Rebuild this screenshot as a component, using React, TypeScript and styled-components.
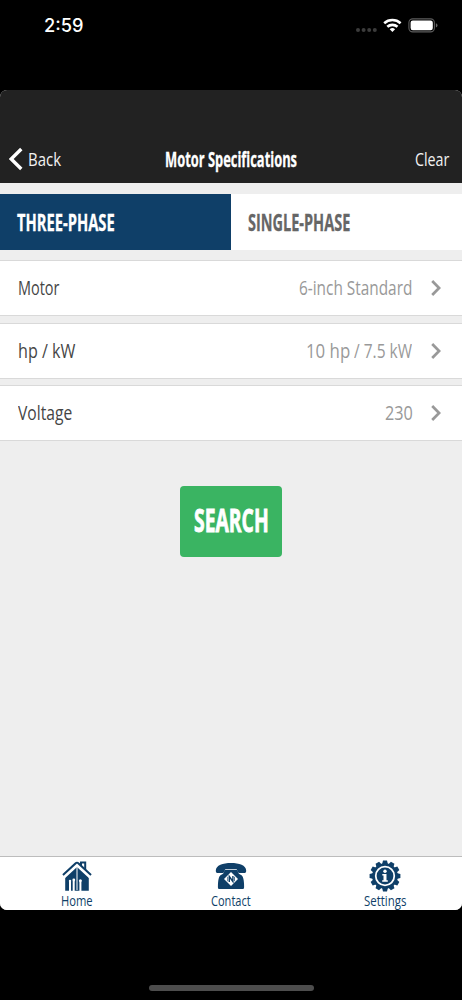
import React, { useLayoutEffect, useRef, useState } from "react";
import styled, { createGlobalStyle } from "styled-components";

const GlobalStyle = createGlobalStyle`
  * { box-sizing: border-box; }
  body { margin: 0; background: #000; font-family: "Open Sans", "Noto Sans", sans-serif; }
  button { font: inherit; border: 0; margin: 0; padding: 0; background: none; color: inherit; text-align: left; }
`;

const FitBox = styled.span<{ $w: number }>`
  display: block;
  flex: none;
  width: ${(p) => p.$w}px;
  white-space: nowrap;
`;
const FitInner = styled.span`
  display: inline-block;
  transform-origin: 0 50%;
`;

/* Condenses a label horizontally so that it fills the given width. */
function Fit({ w, children }: { w: number; children: React.ReactNode }) {
  const ref = useRef<HTMLSpanElement>(null);
  const [scale, setScale] = useState(1);
  useLayoutEffect(() => {
    if (ref.current) setScale(w / ref.current.offsetWidth);
  }, [w]);
  return (
    <FitBox $w={w}>
      <FitInner ref={ref} style={{ transform: `scaleX(${scale})` }}>{children}</FitInner>
    </FitBox>
  );
}

const Phone = styled.div`
  width: 462px;
  height: 1000px;
  background: #000;
  display: flex;
  flex-direction: column;
  overflow: hidden;
`;
const StatusBar = styled.div`
  height: 90px;
  flex: none;
  display: flex;
  align-items: flex-start;
  justify-content: space-between;
  padding: 14px 24px 0 44px;
`;
const Time = styled.div`
  color: #fff;
  font: 550 18px/24px Inter, sans-serif;
`;
const StatusIcons = styled.svg`
  display: block;
  margin-top: 3px;
`;
const Screen = styled.div`
  height: 820px;
  flex: none;
  border-radius: 7px;
  overflow: hidden;
  background: #eee;
  display: flex;
  flex-direction: column;
`;
const Header = styled.header`
  height: 93px;
  flex: none;
  background: #222;
  color: #fff;
  display: grid;
  grid-template-columns: 1fr 132px 1fr;
  align-items: center;
  padding: 44px 12.5px 0 9px;
  font-size: 18.6px;
  line-height: 28px;
`;
const BackButton = styled.button`
  display: flex;
  align-items: center;
  gap: 5px;
  color: #f2f2f2;
`;
const ClearButton = styled.button`
  justify-self: end;
  color: #f2f2f2;
`;
const Title = styled.h1`
  margin: 0 0 0 2px;
  font-size: 20.5px;
  font-weight: 700;
  -webkit-text-stroke: 0.3px currentColor;
`;
const Tabs = styled.div`
  display: flex;
  height: 56px;
  flex: none;
  margin: 11px 0 10px;
`;
const Tab = styled.button<{ $active?: boolean }>`
  flex: 1;
  display: flex;
  align-items: center;
  padding-left: 17px;
  font-size: 24px;
  font-weight: 700;
  line-height: 34px;
  -webkit-text-stroke: 0.3px currentColor;
  background: ${(p) => (p.$active ? "#0f3f68" : "#fff")};
  color: ${(p) => (p.$active ? "#fff" : "#666")};
`;
const List = styled.div`
  display: flex;
  flex-direction: column;
  gap: 6.5px;
`;
const Row = styled.div`
  height: 56px;
  display: flex;
  align-items: center;
  padding: 0 21px 0 18px;
  background: #fff;
  border-top: 1px solid #d9d9d9;
  border-bottom: 1px solid #d9d9d9;
  font-size: 19.5px;
  line-height: 28px;
  color: #454545;
`;
const Value = styled.div`
  margin-left: auto;
  margin-right: 19px;
  display: flex;
  gap: 4px;
  color: #999;
`;
const SearchButton = styled.button`
  align-self: center;
  flex: none;
  margin-top: 44.5px;
  width: 102.5px;
  height: 71.5px;
  border-radius: 4px;
  background: #3ab462;
  color: #fff;
  display: flex;
  align-items: center;
  justify-content: center;
  padding-bottom: 2px;
  font-size: 33px;
  font-weight: 700;
  line-height: 44px;
  -webkit-text-stroke: 0.9px currentColor;
`;
const TabBar = styled.nav`
  margin-top: auto;
  height: 54px;
  flex: none;
  background: #fff;
  border-top: 1px solid #bcbcbc;
  display: grid;
  grid-template-columns: repeat(3, 1fr);
`;
const NavItem = styled.button`
  display: flex;
  flex-direction: column;
  align-items: center;
  padding-top: 3px;
  font-size: 14px;
  line-height: 18px;
  color: #0f3f68;
`;
const NavIcon = styled.svg`
  display: block;
  flex: none;
`;
const HomeIndicator = styled.div`
  width: 165px;
  height: 6px;
  border-radius: 3px;
  background: #4d4d4d;
  margin: 75px auto 0;
`;

const BLUE = "#0f3f68";

function HomeIcon() {
  return (
    <NavIcon width="32" height="32" viewBox="0 0 32 32">
      <path d="M20 7V2.600h4.200V11" fill="#fff" stroke={BLUE} strokeWidth="2" />
      <path d="M4.200 18 16 7l11.800 11v12.800H4.200z" fill={BLUE} />
      <path d="M3.600 16.700 16 5.200l12.400 11.500" fill="none" stroke={BLUE} strokeWidth="6.800" strokeLinejoin="round" />
      <path d="M3 17.300 16 5.200l13 12.100" fill="none" stroke="#fff" strokeWidth="2.600" />
      <path d="M16 6v24" stroke="#fff" strokeWidth="1" />
      <path d="M9 31v-9.500M12.700 31v-10" fill="none" stroke="#fff" strokeWidth="2" />
      <path d="M19.400 31v-9" stroke="#fff" strokeWidth="2" />
      <circle cx="9" cy="20.900" r="1.200" fill="#fff" />
      <circle cx="12.800" cy="20" r="1.400" fill="#fff" />
      <circle cx="19.400" cy="20.700" r="1.500" fill="#fff" />
    </NavIcon>
  );
}

function PhoneIcon() {
  return (
    <NavIcon width="32" height="32" viewBox="0 0 32 32">
      <path d="M.8 10.800C.8 5.300 8 3.100 16 3.100S31.200 5.300 31.200 10.800c0 1.700-.7 2.300-2 2.300h-4.700c-1.500 0-2-1-2.200-2.500-.2-1.200-.7-1.600-1.700-1.600h-9.200c-1 0-1.500.4-1.700 1.600-.2 1.500-.7 2.500-2.200 2.500H2.800c-1.300 0-2-.6-2-2.300z" fill={BLUE} />
      <path d="M10.500 9.800h11c.8 0 1 .4 1.200 1.200.5 2.200 1.200 3 3.400 3.900 2 .8 3 5 3 12 0 1.500-.5 2.200-2 2.200H4.900c-1.500 0-2-.7-2-2.200 0-7 1-11.200 3-12 2.200-.9 2.900-1.700 3.400-3.900.2-.8.400-1.200 1.200-1.200z" fill={BLUE} />
      <path d="m16 12 7 7-7 7-7-7z" fill="#fff" />
      <path d="M14.300 22v-5.500l3.600 5v-5.500" fill="none" stroke={BLUE} strokeWidth="1.400" />
      <path d="M12.700 16.800v4.400M19.500 16.800v4.400" stroke={BLUE} strokeWidth=".7" />
    </NavIcon>
  );
}

function GearIcon() {
  const teeth = Array.from({ length: 12 }, (_, i) => i * 30);
  return (
    <NavIcon width="32" height="32" viewBox="0 0 32 32">
      {teeth.map((a) => (
        <path key={a} d="M13 4.500 14 .6h4l1 3.900z" fill={BLUE} transform={`rotate(${a} 16 16)`} />
      ))}
      <circle cx="16" cy="16" r="11.500" fill="#fff" stroke={BLUE} strokeWidth="2.700" />
      <circle cx="16" cy="16" r="8.400" fill={BLUE} />
      <circle cx="16" cy="11.300" r="1.700" fill="#fff" />
      <path d="M13.300 14h4.200v6.300h1.300v1.500h-5.600v-1.500h1.300v-4.800h-1.200z" fill="#fff" />
    </NavIcon>
  );
}

function Chevron() {
  return (
    <svg width="10" height="16" viewBox="0 0 10 16">
      <path d="m1.200 1 6.900 7-6.900 7" fill="none" stroke="#999" strokeWidth="2.700" />
    </svg>
  );
}

export default function App() {
  return (
    <Phone>
      <GlobalStyle />
      <StatusBar>
        <Time><Fit w={39.5}>2:59</Fit></Time>
        <StatusIcons width="83" height="18" viewBox="0 0 83 18">
          <g fill="#3c3c3c">
            <circle cx="3" cy="13" r="2" />
            <circle cx="8.600" cy="13" r="2" />
            <circle cx="14.200" cy="13" r="2" />
            <circle cx="19.800" cy="13" r="2" />
          </g>
          <g fill="none" stroke="#fff" strokeWidth="2.600">
            <path d="M29.200 6.200a12.300 12.300 0 0 1 16.400 0" />
            <path d="M32.300 9.800a7.600 7.600 0 0 1 10.200 0" />
          </g>
          <path d="M34.700 12.200a4 4 0 0 1 5.400 0l-2.700 2.900z" fill="#fff" />
          <rect x="53.900" y="1.900" width="25.500" height="13" rx="3.800" fill="none" stroke="#5c5c5c" strokeWidth="1.100" />
          <rect x="55.600" y="3.600" width="22.200" height="9.700" rx="2.200" fill="#fff" />
          <path d="M80.900 6.200q1.600.6 1.600 2.200t-1.600 2.200z" fill="#666" />
        </StatusIcons>
      </StatusBar>
      <Screen>
        <Header>
          <BackButton>
            <svg width="14" height="24" viewBox="0 0 14 24">
              <path d="M12.300 2 2.200 12l10.100 10" fill="none" stroke="#fff" strokeWidth="3.400" />
            </svg>
            <Fit w={33}>Back</Fit>
          </BackButton>
          <Title><Fit w={132}>Motor Specifications</Fit></Title>
          <ClearButton><Fit w={34.5}>Clear</Fit></ClearButton>
        </Header>
        <Tabs>
          <Tab $active><Fit w={97.5}>THREE-PHASE</Fit></Tab>
          <Tab><Fit w={102}>SINGLE-PHASE</Fit></Tab>
        </Tabs>
        <List>
          <Row>
            <Fit w={41.5}>Motor</Fit>
            <Value><Fit w={113.5}>6-inch Standard</Fit></Value>
            <Chevron />
          </Row>
          <Row>
            <Fit w={57}>hp / kW</Fit>
            <Value><Fit w={44}>10 hp</Fit><Fit w={58}>/ 7.5 kW</Fit></Value>
            <Chevron />
          </Row>
          <Row>
            <Fit w={54.5}>Voltage</Fit>
            <Value><Fit w={27.5}>230</Fit></Value>
            <Chevron />
          </Row>
        </List>
        <SearchButton><Fit w={75}>SEARCH</Fit></SearchButton>
        <TabBar>
          <NavItem><HomeIcon /><Fit w={32}>Home</Fit></NavItem>
          <NavItem><PhoneIcon /><Fit w={39.5}>Contact</Fit></NavItem>
          <NavItem><GearIcon /><Fit w={42.5}>Settings</Fit></NavItem>
        </TabBar>
      </Screen>
      <HomeIndicator />
    </Phone>
  );
}
